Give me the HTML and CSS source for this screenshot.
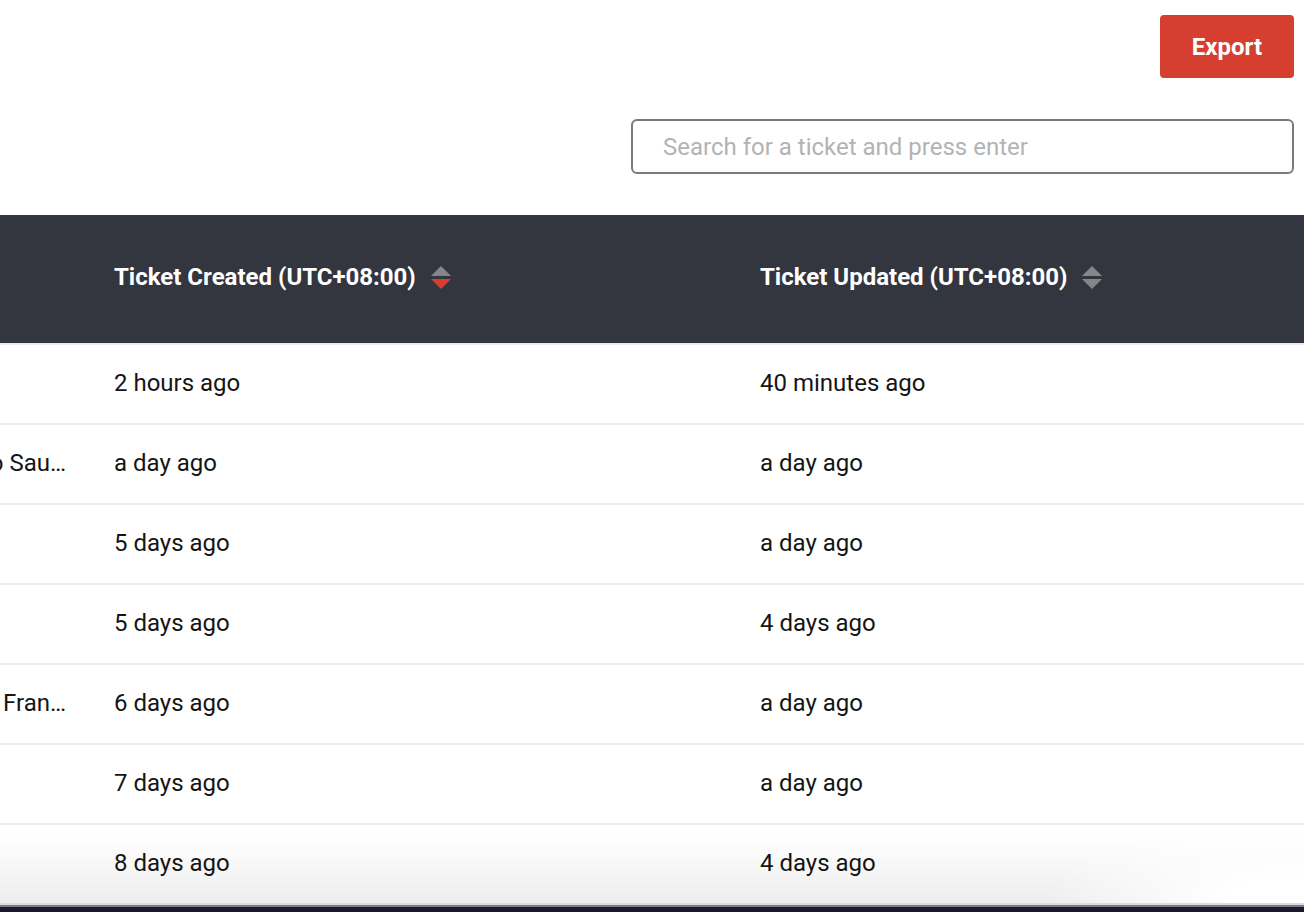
FILE: index.html
```html
<!DOCTYPE html>
<html lang="en">
<head>
<meta charset="utf-8">
<title>Tickets</title>
<link rel="stylesheet" href="styles.css">
</head>
<body>
<div class="page">
  <div class="toolbar">
    <button class="btn-export" type="button">Export</button>
  </div>
  <div class="search-row">
    <input class="search" type="text" placeholder="Search for a ticket and press enter">
  </div>
  <div class="table">
    <div class="thead">
      <div class="cell c1"></div>
      <div class="cell c2 th">Ticket Created (UTC+08:00)
        <svg class="sort" width="20" height="24" viewBox="0 0 20 24"><polygon points="10,0 20,10 0,10" fill="#85868b"/><polygon points="0,13 20,13 10,23" fill="#d63f30"/></svg>
      </div>
      <div class="cell c3 th">Ticket Updated (UTC+08:00)
        <svg class="sort" width="20" height="24" viewBox="0 0 20 24"><polygon points="10,0 20,10 0,10" fill="#85868b"/><polygon points="0,13 20,13 10,23" fill="#85868b"/></svg>
      </div>
    </div>
    <div class="row"><div class="cell c1"></div><div class="cell c2">2 hours ago</div><div class="cell c3">40 minutes ago</div></div>
    <div class="row"><div class="cell c1">Transfer to Sau…</div><div class="cell c2">a day ago</div><div class="cell c3">a day ago</div></div>
    <div class="row"><div class="cell c1"></div><div class="cell c2">5 days ago</div><div class="cell c3">a day ago</div></div>
    <div class="row"><div class="cell c1"></div><div class="cell c2">5 days ago</div><div class="cell c3">4 days ago</div></div>
    <div class="row"><div class="cell c1">Transfer to Fran…</div><div class="cell c2">6 days ago</div><div class="cell c3">a day ago</div></div>
    <div class="row"><div class="cell c1"></div><div class="cell c2">7 days ago</div><div class="cell c3">a day ago</div></div>
    <div class="row"><div class="cell c1"></div><div class="cell c2">8 days ago</div><div class="cell c3">4 days ago</div></div>
  </div>
</div>
<div class="bottom-fade"></div>
<div class="bottom-bar"></div>
</body>
</html>
```

FILE: styles.css
```css
html, body {
  margin: 0;
  padding: 0;
  background: #ffffff;
  overflow: hidden;
  height: 912px;
}
body {
  font-family: Roboto, "Liberation Sans", sans-serif;
  color: #151515;
}
.page {
  width: 1304px;
}
.toolbar {
  display: flex;
  justify-content: flex-end;
  padding: 15px 10px 0 0;
}
.btn-export {
  width: 134px;
  height: 63px;
  background: #d63f30;
  color: #ffffff;
  border: none;
  border-radius: 4px;
  font-family: Roboto, "Liberation Sans", sans-serif;
  font-weight: 700;
  font-size: 24px;
  padding: 0;
}
.search-row {
  display: flex;
  justify-content: flex-end;
  padding: 41px 10px 0 0;
}
.search {
  box-sizing: border-box;
  width: 663px;
  height: 55px;
  border: 2px solid #7a7a7a;
  border-radius: 6px;
  padding: 0 0 0 30px;
  font-family: Roboto, "Liberation Sans", sans-serif;
  font-size: 24px;
  color: #222;
  outline: none;
}
.search::placeholder {
  color: #b3b3b3;
}
.table {
  margin-top: 41px;
  margin-left: -180px;
  width: 1484px;
}
.thead, .row {
  display: grid;
  grid-template-columns: 270px 646px 1fr;
  align-items: center;
}
.thead {
  height: 128px;
  background: #33353f;
}
.row {
  height: 78px;
  border-top: 2px solid #ebebef;
}
.cell {
  font-size: 24px;
  white-space: nowrap;
  overflow: hidden;
}
.c1 {
  padding-right: 24px;
  text-align: right;
}
.c2, .c3 {
  padding-left: 24px;
}
.row .cell {
  padding-bottom: 2px;
}
.th {
  color: #ffffff;
  font-weight: 700;
  display: flex;
  align-items: center;
  padding-bottom: 4px;
}
.sort {
  margin-left: 15px;
  margin-top: 2px;
  flex: none;
}
.bottom-fade {
  position: absolute;
  left: 0;
  right: 0;
  top: 835px;
  height: 68px;
  pointer-events: none;
  background:
    radial-gradient(ellipse 260px 90px at 100% 100%, rgba(255,255,255,1) 30%, rgba(255,255,255,0) 100%),
    linear-gradient(to bottom, rgba(0,0,0,0) 0%, rgba(0,0,0,0.07) 100%);
}
.bottom-bar {
  position: absolute;
  left: 0;
  right: 0;
  top: 903px;
  height: 9px;
  background: linear-gradient(to bottom, #dcdce0 0, #dcdce0 2px, #7c7b80 2px, #7c7b80 4px, #221a33 4px, #1d1530 100%);
}
```
